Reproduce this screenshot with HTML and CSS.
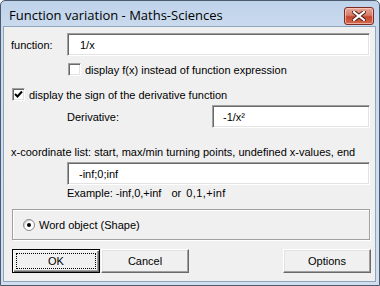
FILE: index.html
```html
<!DOCTYPE html>
<html lang="en">
<head>
  <meta charset="UTF-8" />
  <title>Function variation - Maths-Sciences</title>
  <link rel="stylesheet" href="styles.css">
</head>
<body>
  <div class="window">
    <!-- Title bar -->
    <div class="titlebar">
      <span class="title">Function variation - Maths-Sciences</span>
      <button class="close-btn" aria-label="Close">
        <svg width="14" height="10" viewBox="0 0 14 10">
          <path d="M2 1 L12 9 M12 1 L2 9" stroke="#4a1a14" stroke-width="4" stroke-linecap="square"/>
          <path d="M2 1 L12 9 M12 1 L2 9" stroke="#fff" stroke-width="2.2" stroke-linecap="square"/>
        </svg>
      </button>
    </div>

    <!-- Dialog body -->
    <div class="client">
      <div class="row">
        <label class="label">function:</label>
        <div class="field field-wide">1/x</div>
      </div>

      <div class="check-row row-indent">
        <span class="checkbox"></span>
        <span>display f(x) instead of function expression</span>
      </div>

      <div class="check-row row-sign">
        <span class="checkbox">
          <svg width="11" height="11" viewBox="0 0 11 11">
            <path d="M2 5 L4.5 7.5 L9 2.5" fill="none" stroke="#000" stroke-width="2"/>
          </svg>
        </span>
        <span>display the sign of the derivative function</span>
      </div>

      <div class="row row-derivative">
        <label class="label label-deriv">Derivative:</label>
        <div class="field field-deriv">-1/x²</div>
      </div>

      <div class="text-row row-xlabel">x-coordinate list: start, max/min turning points, undefined x-values, end</div>

      <div class="field field-list">-inf;0;inf</div>

      <div class="text-row row-example">
        <span>Example:</span><span class="ex-values">-inf,0,+inf</span><span class="ex-or">or</span><span class="ex-alt">0,1,+inf</span>
      </div>

      <div class="groupbox">
        <span class="radio"><span class="radio-dot"></span></span>
        <span>Word object (Shape)</span>
      </div>

      <div class="buttons">
        <button class="btn btn-default"><span class="focus">OK</span></button>
        <button class="btn">Cancel</button>
        <span class="spacer"></span>
        <button class="btn">Options</button>
      </div>
    </div>
  </div>
</body>
</html>
```

FILE: styles.css
```css
/* Reset */
* {
  box-sizing: border-box;
  margin: 0;
  padding: 0;
}

body {
  width: 380px;
  height: 286px;
  font-family: "Liberation Sans", Arial, sans-serif;
  font-size: 11px;
  color: #000;
  background: #fff;
  overflow: hidden;
}

/* Window frame */
.window {
  width: 380px;
  height: 286px;
  border: 1px solid #4b5a6d;
  border-radius: 5px 5px 0 0;
  background: linear-gradient(#bed2ea, #cbdbee 26px, #d0def0);
  padding: 0 3px 3px 2px;
  display: flex;
  flex-direction: column;
}

.titlebar {
  height: 25px;
  display: flex;
  align-items: center;
  justify-content: space-between;
  padding-left: 6px;
  padding-right: 2px;
}

.title {
  font-family: "Open Sans", "Noto Sans", sans-serif;
  font-size: 13px;
  color: #000;
  margin-top: 2px;
}

.close-btn {
  width: 30px;
  height: 18px;
  margin-top: 4px;
  border: 1px solid #7a2c22;
  border-radius: 3px;
  background: linear-gradient(#e9a89a, #d77c69 45%, #c4452f 55%, #d36a4f);
  box-shadow: inset 0 0 0 1px rgba(255, 220, 210, 0.6);
  display: flex;
  align-items: center;
  justify-content: center;
}

/* Client area */
.client {
  flex: 1;
  background: #f0f0f0;
  border: 1px solid #8fa4bd;
  padding: 6px 5px 0 7px;
  display: flex;
  flex-direction: column;
}

.row {
  display: flex;
  align-items: center;
}

.label {
  width: 56px;
}

.label-deriv {
  width: 201px;
  padding-left: 56px;
}

/* Sunken edit fields */
.field {
  height: 23px;
  background: #fff;
  border: 1px solid;
  border-color: #a0a0a0 #fff #fff #a0a0a0;
  box-shadow: inset 1px 1px #696969, inset -1px -1px #e3e3e3;
  display: flex;
  align-items: center;
  padding-left: 12px;
}

.field-wide {
  flex: 1;
}

.field-deriv {
  flex: 1;
  padding-left: 10px;
}

.field-list {
  margin: 3px 0 0 56px;
  padding-left: 11px;
}

/* Checkboxes */
.check-row {
  display: flex;
  align-items: center;
  gap: 4px;
  height: 13px;
}

.row-indent {
  margin: 7px 0 0 57px;
}

.row-sign {
  margin: 12px 0 0 1px;
}

.checkbox {
  width: 13px;
  height: 13px;
  background: #fff;
  border: 1px solid;
  border-color: #a0a0a0 #fff #fff #a0a0a0;
  box-shadow: inset 1px 1px #696969, inset -1px -1px #e3e3e3;
  display: flex;
  align-items: center;
  justify-content: center;
}

.row-derivative {
  margin-top: 4px;
}

.text-row {
  height: 13px;
  line-height: 13px;
  white-space: nowrap;
}

.row-xlabel {
  margin-top: 18px;
}

.row-example {
  margin: 2px 0 0 56px;
  display: flex;
}

.ex-values {
  margin-left: 3px;
}

.ex-or {
  margin-left: 10px;
}

.ex-alt {
  margin-left: 5px;
  letter-spacing: 0.4px;
}

/* Group box */
.groupbox {
  margin: 9px 0 0 1px;
  height: 31px;
  border: 1px solid #a0a0a0;
  box-shadow: inset 1px 1px #fff, 1px 1px #fff;
  display: flex;
  align-items: center;
  gap: 4px;
  padding-left: 10px;
}

.radio {
  width: 12px;
  height: 12px;
  border-radius: 50%;
  background: #fff;
  border: 1px solid #8a8a8a;
  box-shadow: inset 1px 1px #d0d0d0;
  display: flex;
  align-items: center;
  justify-content: center;
}

.radio-dot {
  width: 4px;
  height: 4px;
  border-radius: 50%;
  background: #000;
}

/* Buttons */
.buttons {
  display: flex;
  margin: 9px -1px 0 1px;
  gap: 1px;
}

.spacer {
  flex: 1;
}

.btn {
  width: 88px;
  height: 24px;
  font-family: "Liberation Sans", Arial, sans-serif;
  font-size: 11px;
  color: #000;
  background: #f0f0f0;
  border: 1px solid;
  border-color: #fff #696969 #696969 #fff;
  box-shadow: inset -1px -1px #a0a0a0, inset 1px 1px #e3e3e3;
  display: flex;
  align-items: center;
  justify-content: center;
}

.btn-default {
  border: 1px solid #000;
  box-shadow: inset 1px 1px #fff, inset -1px -1px #696969, inset -2px -2px #a0a0a0;
  padding: 3px;
}

.focus {
  flex: 1;
  align-self: stretch;
  border: 1px dotted #000;
  display: flex;
  align-items: center;
  justify-content: center;
}
```
